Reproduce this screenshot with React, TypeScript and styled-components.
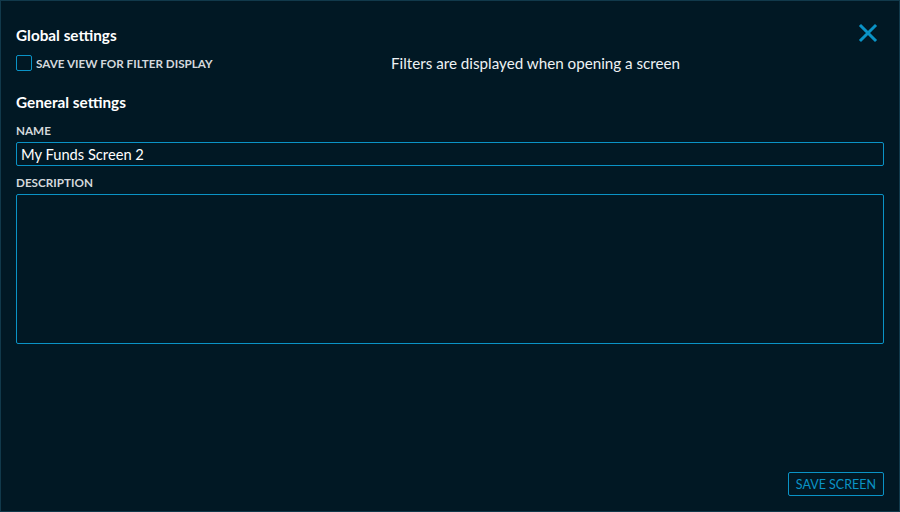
import React from "react";
import styled, { createGlobalStyle } from "styled-components";

const Global = createGlobalStyle`
  html, body, #root { margin: 0; padding: 0; height: 100%; }
  body { background: #011824; font-family: "Source Sans Pro", Lato, "Liberation Sans", sans-serif; }
  * { box-sizing: border-box; }
`;

const Panel = styled.div`
  height: 512px;
  width: 900px;
  border: 1px solid #11394b;
  background: #011824;
  padding: 24px 15px 15px 15px;
  display: flex;
  flex-direction: column;
  position: relative;
  color: #ffffff;
`;

const Close = styled.button`
  position: absolute;
  top: 22px;
  right: 21px;
  width: 20px;
  height: 20px;
  padding: 0;
  border: 0;
  background: none;
  cursor: pointer;
`;

const Heading = styled.div`
  font-size: 15.3px;
  font-weight: 700;
  color: #ffffff;
  line-height: 20px;
`;

const OptionRow = styled.div`
  display: grid;
  grid-template-columns: 375px 1fr;
  align-items: center;
  margin-top: 9px;
  margin-bottom: 20px;
  height: 18px;
`;

const CheckLabel = styled.label`
  display: flex;
  align-items: center;
  gap: 4px;
  font-size: 11.7px;
  font-weight: 700;
  color: #d4d8dc;
  text-transform: uppercase;
`;

const Box = styled.span`
  width: 16px;
  height: 16px;
  border: 1px solid #0a93c6;
  border-radius: 2px;
  display: inline-block;
`;

const Hint = styled.div`
  font-size: 15.2px;
  line-height: 18px;
  color: #eef2f4;
`;

const FieldLabel = styled.div<{ $top: number }>`
  font-size: 11.7px;
  font-weight: 700;
  color: #d4d8dc;
  text-transform: uppercase;
  margin-top: ${(p) => p.$top}px;
  margin-bottom: 5px;
  line-height: 14px;
`;

const TextInput = styled.input`
  width: 100%;
  height: 24px;
  background: transparent;
  border: 1px solid #0a93c6;
  border-radius: 2px;
  color: #ffffff;
  font: inherit;
  font-size: 14.7px;
  padding: 0 4px;
  outline: none;
`;

const TextArea = styled.textarea`
  width: 100%;
  height: 150px;
  background: transparent;
  border: 1px solid #0a93c6;
  border-radius: 2px;
  color: #ffffff;
  font: inherit;
  resize: none;
  outline: none;
`;

const Footer = styled.div`
  margin-top: auto;
  display: flex;
  justify-content: flex-end;
`;

const SaveButton = styled.button`
  height: 24px;
  padding: 0 7px;
  background: transparent;
  border: 1px solid #0a93c6;
  border-radius: 2px;
  color: #0a93c6;
  font: inherit;
  font-size: 12.5px;
  text-transform: uppercase;
`;

export default function App() {
  return (
    <>
      <Global />
      <Panel>
        <Close aria-label="close">
          <svg width="20" height="20" viewBox="0 0 20 20">
            <path d="M3 3 L17 17 M17 3 L3 17" stroke="#0a93c6" strokeWidth="3" strokeLinecap="square" />
          </svg>
        </Close>
        <Heading>Global settings</Heading>
        <OptionRow>
          <CheckLabel>
            <Box />
            Save view for filter display
          </CheckLabel>
          <Hint>Filters are displayed when opening a screen</Hint>
        </OptionRow>
        <Heading>General settings</Heading>
        <FieldLabel $top={11}>Name</FieldLabel>
        <TextInput defaultValue="My Funds Screen 2" />
        <FieldLabel $top={9}>Description</FieldLabel>
        <TextArea />
        <Footer>
          <SaveButton>Save screen</SaveButton>
        </Footer>
      </Panel>
    </>
  );
}
